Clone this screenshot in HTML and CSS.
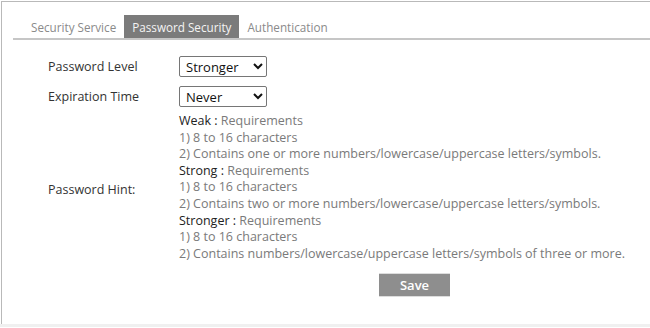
FILE: index.html
```
<!DOCTYPE html>
<html lang="en">
<head>
  <meta charset="UTF-8" />
  <title>Password Security</title>
  <link rel="stylesheet" href="styles.css">
</head>
<body>
  <div class="frame">
    <nav class="tabs">
      <button>Security Service</button>
      <button class="active">Password Security</button>
      <button>Authentication</button>
    </nav>

    <div class="form">
      <div class="label">Password Level</div>
      <div class="value">
        <select>
          <option>Weak</option>
          <option>Strong</option>
          <option selected>Stronger</option>
        </select>
      </div>

      <div class="label">Expiration Time</div>
      <div class="value">
        <select>
          <option selected>Never</option>
          <option>30 Days</option>
          <option>60 Days</option>
          <option>90 Days</option>
        </select>
      </div>

      <div class="label hint-label">Password Hint:</div>
      <div class="value hint">
        <div><b>Weak :</b> Requirements</div>
        <div>1) 8 to 16 characters</div>
        <div>2) Contains one or more numbers/lowercase/uppercase letters/symbols.</div>
        <div><b>Strong :</b> Requirements</div>
        <div>1) 8 to 16 characters</div>
        <div>2) Contains two or more numbers/lowercase/uppercase letters/symbols.</div>
        <div><b>Stronger :</b> Requirements</div>
        <div>1) 8 to 16 characters</div>
        <div>2) Contains numbers/lowercase/uppercase letters/symbols of three or more.</div>
      </div>

      <div></div>
      <div class="value">
        <button class="save">Save</button>
      </div>
    </div>
  </div>
  <div class="footer"></div>
</body>
</html>
```

FILE: styles.css
```
body {
  margin: 0;
  font-family: "Open Sans", "Noto Sans", sans-serif;
  font-size: 12.5px;
  color: #333;
  background: #fff;
}
.frame {
  margin-top: 1px;
  margin-left: 1px;
  height: 323px;
  border-top: 1px solid #b9b9b9;
  border-left: 1px solid #b9b9b9;
  box-sizing: border-box;
}
.footer {
  height: 3px;
  background: #f0f0f0;
}
/* Sekmeler */
.tabs {
  display: flex;
  margin: 13px 0 0 11px;
  padding-left: 10px;
  border-bottom: 2px solid #c6c6c6;
}
.tabs button {
  font-family: inherit;
  font-size: 11.7px;
  background: none;
  border: none;
  color: #8a8a8a;
  padding: 1px 8px 0;
  height: 23px;
  line-height: 22px;
  cursor: pointer;
}
.tabs button.active {
  background: #7b7b7b;
  color: #f4f4f4;
}
/* Form */
.form {
  display: grid;
  grid-template-columns: 131px 1fr;
  row-gap: 9px;
  padding: 16px 0 0 46px;
  align-items: center;
}
.label {
  color: #333;
}
.value select {
  width: 88px;
  height: 21px;
  font-family: inherit;
  font-size: 13px;
  color: #111;
  border: 1px solid #767676;
  border-radius: 2px;
  background: #fff;
  padding: 0 2px;
}
.hint {
  color: #7a7a7a;
  line-height: 16.6px;
  margin-top: -3px;
}
.hint b {
  font-weight: normal;
  color: #222;
}
.save {
  margin: 2px 0 0 200px;
  width: 71px;
  height: 24px;
  background: #8e8e8e;
  color: #fff;
  border: none;
  border-top: 1px solid #ddd;
  border-bottom: 1px solid #ddd;
  font-family: inherit;
  font-size: 13px;
  font-weight: 600;
  cursor: pointer;
}
```
